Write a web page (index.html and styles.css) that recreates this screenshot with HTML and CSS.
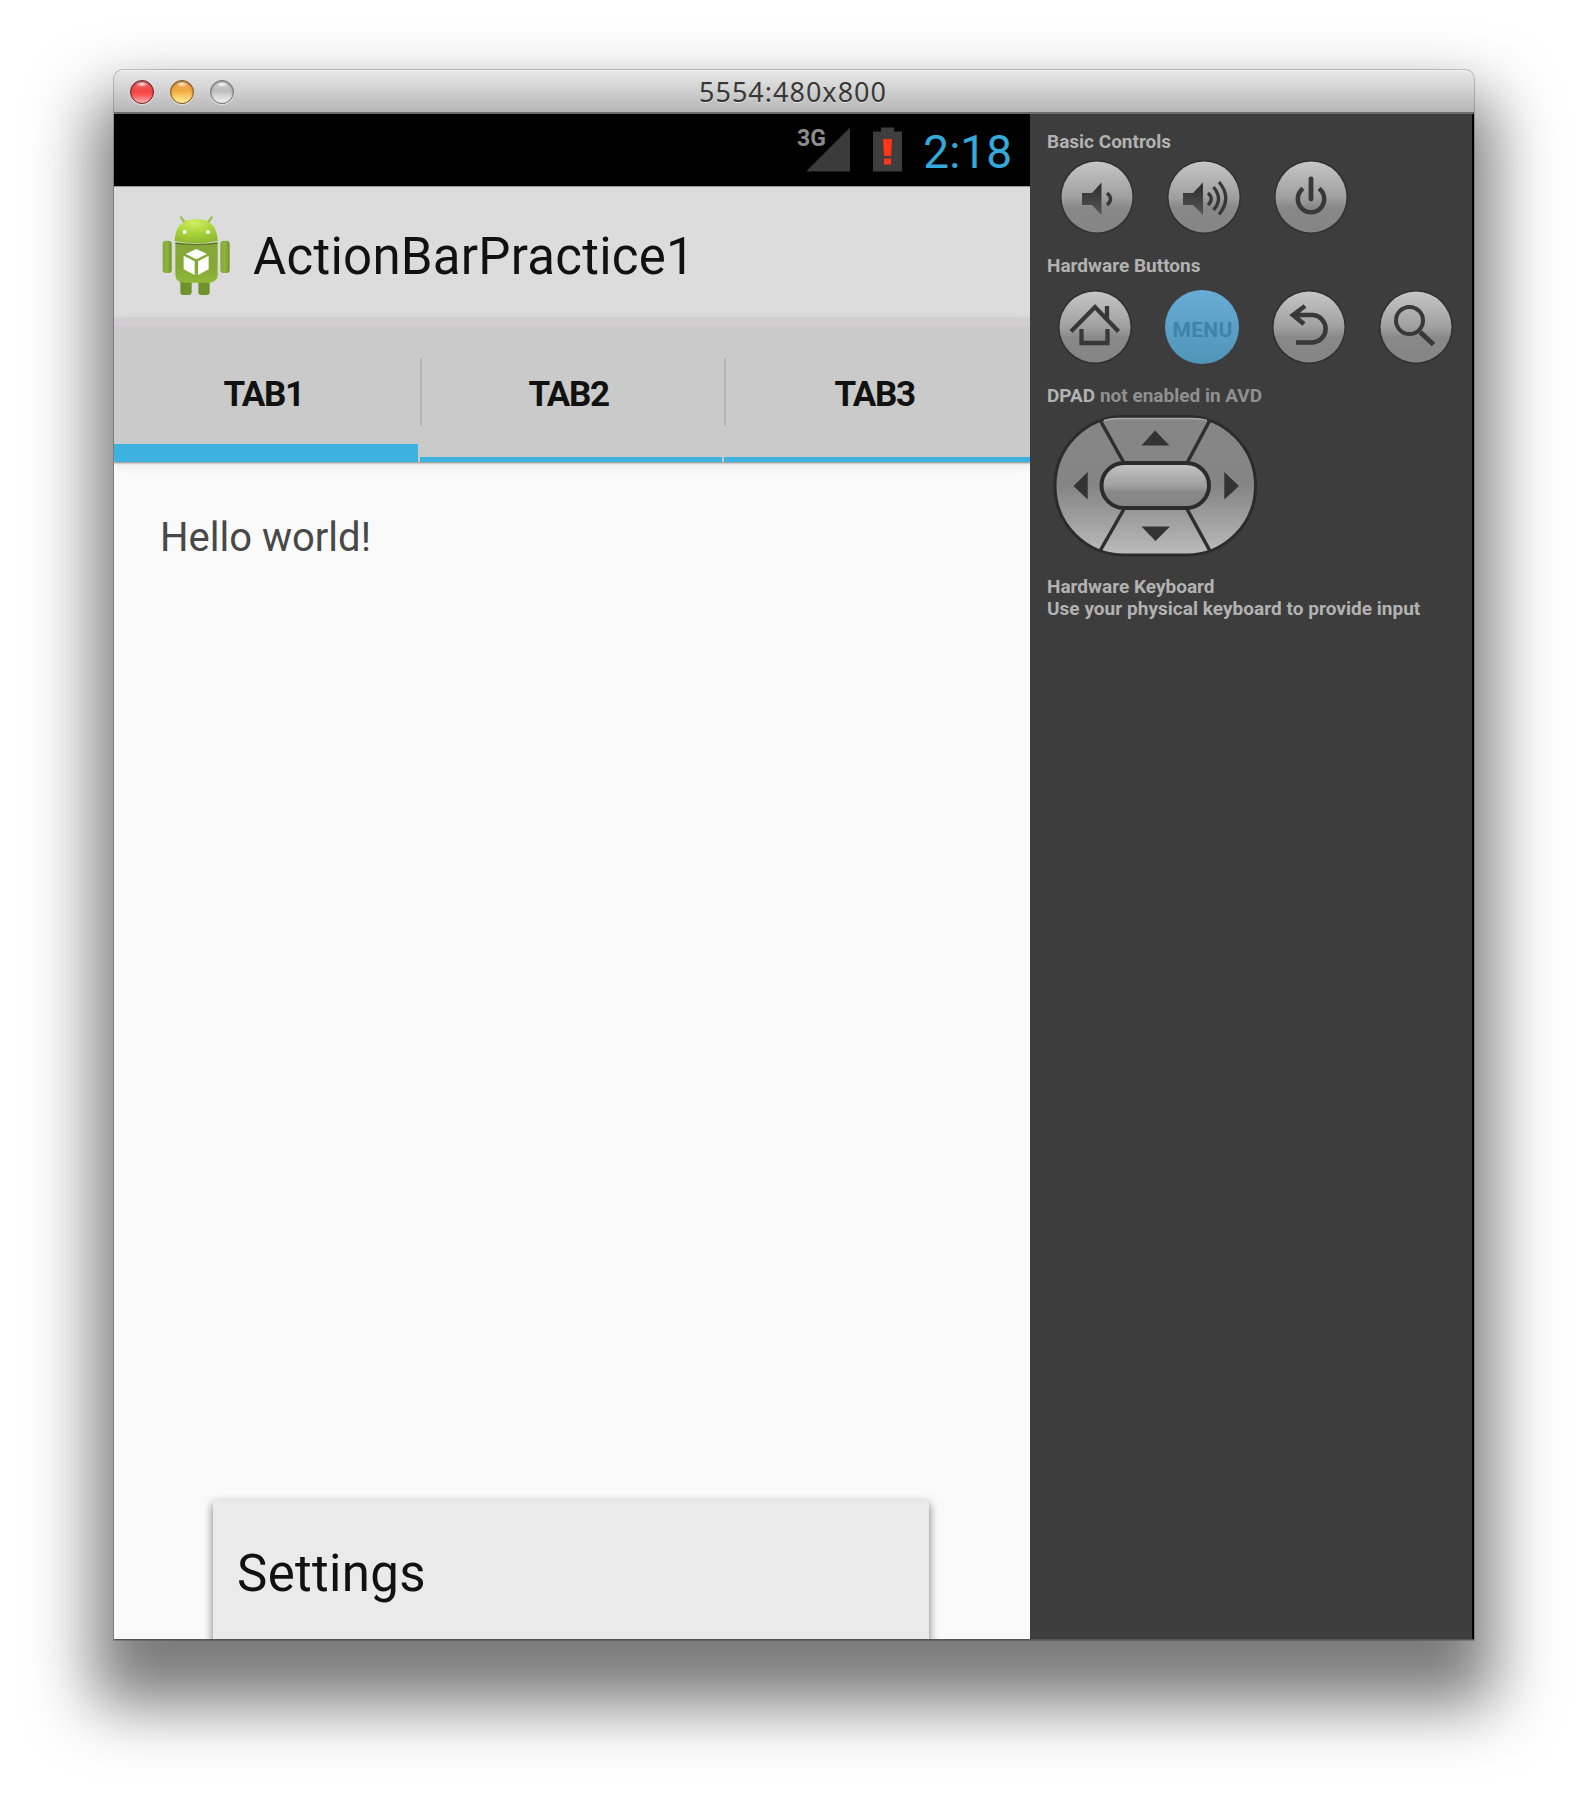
FILE: index.html
```html
<!DOCTYPE html>
<html lang="en">
<head>
<meta charset="utf-8">
<title>5554:480x800</title>
<link rel="stylesheet" href="styles.css">
</head>
<body>
<svg class="defs" width="0" height="0" aria-hidden="true">
  <defs>
    <linearGradient id="metal" x1="0" y1="0" x2="0" y2="1">
      <stop offset="0" stop-color="#c6c6c6"/><stop offset=".5" stop-color="#a0a0a0"/><stop offset=".65" stop-color="#888"/><stop offset="1" stop-color="#858585"/>
    </linearGradient>
    <linearGradient id="pad" x1="0" y1="0" x2="0" y2="1">
      <stop offset="0" stop-color="#868686"/><stop offset=".5" stop-color="#858585"/><stop offset=".8" stop-color="#a5a5a5"/><stop offset="1" stop-color="#bcbcbc"/>
    </linearGradient>
    <linearGradient id="glyph" x1="0" y1="0" x2="0" y2="1">
      <stop offset="0" stop-color="#2c2c2c"/><stop offset="1" stop-color="#555"/>
    </linearGradient>
    <linearGradient id="blue" x1="0" y1="0" x2="0" y2="1">
      <stop offset="0" stop-color="#68add4"/><stop offset="1" stop-color="#5094ba"/>
    </linearGradient>
    <linearGradient id="limb" x1="0" y1="0" x2="1" y2="0">
      <stop offset="0" stop-color="#84a836"/><stop offset=".5" stop-color="#8fb441"/><stop offset="1" stop-color="#6f9129"/>
    </linearGradient>
    <linearGradient id="torso" x1="0" y1="0" x2="0" y2="1">
      <stop offset="0" stop-color="#86a63a"/><stop offset=".6" stop-color="#85a934"/><stop offset="1" stop-color="#8fb83a"/>
    </linearGradient>
    <radialGradient id="head" cx=".45" cy=".15" r=".9">
      <stop offset="0" stop-color="#d3ee63"/><stop offset=".5" stop-color="#a8d43a"/><stop offset="1" stop-color="#8ab62f"/>
    </radialGradient>
  </defs>
</svg>

<main class="window">
  <header class="titlebar">
    <div class="lights"><i class="light red"></i><i class="light amber"></i><i class="light clear"></i></div>
    <h1 class="title">5554:480x800</h1>
  </header>
  <div class="content">
    <section class="screen">
      <div class="status">
        <svg class="signal" width="56" height="48" viewBox="0 0 56 48">
          <path d="M10 45.500 54 1.500V45.500Z" fill="#3b3b3b"/>
          <text x="1" y="20" class="net">3G</text>
        </svg>
        <svg class="battery" width="30" height="46" viewBox="0 0 30 46">
          <path d="M0 5.500H8V1.500H21V5.500H29V45.500H0Z" fill="#3e3e3e"/>
          <path d="M10 13H19L18 30H11ZM11 32.500H18V38.500H11Z" fill="#ff3519"/>
        </svg>
        <span class="clock">2:18</span>
      </div>
      <div class="actionbar">
        <svg width="100" height="110" viewBox="0 0 300 330">
          <path d="M93 49l12 17M185 49l-12 17" stroke="#9dbd55" stroke-width="7" stroke-linecap="round"/>
          <path d="M91 235h34v38q0 9-9 9h-16q-9 0-9-9zM145 235h34v38q0 9-9 9h-16q-9 0-9-9z" fill="#6f932a"/>
          <rect x="38" y="119" width="27" height="97" rx="10" fill="url(#limb)"/>
          <rect x="211" y="119" width="28" height="97" rx="10" fill="url(#limb)"/>
          <path d="M76 128H203V220Q203 245 178 245H101Q76 245 76 220Z" fill="url(#torso)"/>
          <path d="M74 120Q76 55 139 54Q201 55 203 120Q139 134 74 120Z" fill="url(#head)"/>
          <path d="M76 124Q139 134 203 124V129Q139 136 76 129Z" fill="#5c7822"/>
          <circle cx="104" cy="93" r="6" fill="#fff"/><circle cx="174" cy="93" r="6" fill="#fff"/>
          <path d="M139 144 171 159 139 175 107 159ZM101 164 134 181V222L101 205ZM176 164 144 181V222L176 205Z" fill="#fff"/>
        </svg>
        <span class="app-name">ActionBarPractice1</span>
      </div>
      <nav class="tabs">
        <a class="tab selected">TAB1</a>
        <a class="tab">TAB2</a>
        <a class="tab">TAB3</a>
      </nav>
      <div class="page"><p class="hello">Hello world!</p></div>
      <div class="menu"><span class="menu-item">Settings</span></div>
    </section>

    <aside class="side">
      <h2 class="label">Basic Controls</h2>
      <div class="buttons first">
        <svg class="btn" viewBox="-38 -38 76 76"><circle class="rim" r="37"/><circle r="35.500" fill="url(#metal)"/>
          <path d="M-15-4H-5L4.500-14.500V18L-5 8H-15Z" fill="url(#glyph)"/><path class="line" stroke-width="3.500" d="M10-4Q17 2 10 8"/></svg>
        <svg class="btn" viewBox="-38 -38 76 76"><circle class="rim" r="37"/><circle r="35.500" fill="url(#metal)"/>
          <path d="M-21-4H-11L-1-14.500V18L-11 8H-21Z" fill="url(#glyph)"/><path class="line" stroke-width="3.300" d="M4-4Q10.500 2 4 8M9.500-10Q19.500 2 9.500 13M15-15Q28.500 1 15 17.500"/></svg>
        <svg class="btn" viewBox="-38 -38 76 76"><circle class="rim" r="37"/><circle r="35.500" fill="url(#metal)"/>
          <path class="line" stroke-width="4.500" d="M-8-8.500A13.200 13.200 0 1 0 8-8.500"/><path class="line" stroke-width="4.800" stroke-linecap="round" d="M0-18V2"/></svg>
      </div>
      <h2 class="label">Hardware Buttons</h2>
      <div class="buttons second">
        <svg class="btn" viewBox="-38 -38 76 76"><circle class="rim" r="37"/><circle r="35.500" fill="url(#metal)"/>
          <path class="line" stroke-width="4.300" d="M-24 4.500 0-20 23.500 4.500M12-21V-8M-13.500 2V16H12.500V2"/></svg>
        <svg class="btn" viewBox="-38 -38 76 76"><circle r="37" fill="url(#blue)"/><text class="menu-text" x="0.500" y="9.500">MENU</text></svg>
        <svg class="btn" viewBox="-38 -38 76 76"><circle class="rim" r="37"/><circle r="35.500" fill="url(#metal)"/>
          <path class="line" stroke-width="4.500" d="M-4-21-16-12-5-3M-15-12H4A13.800 13.800 0 0 1 4 15.500H-13"/></svg>
        <svg class="btn" viewBox="-38 -38 76 76"><circle class="rim" r="37"/><circle r="35.500" fill="url(#metal)"/>
          <circle class="line" stroke-width="4" cx="-6.500" cy="-6.500" r="13.500"/><path class="line" stroke-width="5" d="M4 5 17.500 17.500"/></svg>
      </div>
      <h2 class="label">DPAD <span class="dim">not enabled in AVD</span></h2>
      <svg class="dpad" width="206" height="147" viewBox="0 0 206 147">
        <rect x="3" y="4.500" width="200.500" height="138.500" rx="69" ry="69" fill="url(#pad)" stroke="#2b2b2b" stroke-width="3"/>
        <path d="M52 8.500Q59 6.500 66 6.500H140Q149 6.500 155 8.500" fill="none" stroke="#aaa" stroke-width="1.500"/>
        <path d="M48 8 72 51M158 8 135 51M48 139 72 97M158 139 135 97" stroke="#2e2e2e" stroke-width="3.500"/>
        <rect x="49.500" y="51" width="107.500" height="45" rx="22.500" fill="url(#metal)" stroke="#2b2b2b" stroke-width="4"/>
        <path d="M103 18.500 117.500 33.500H89.500ZM89.500 114.500H118L103.500 129ZM21.500 74 35.700 60V87.500ZM172.300 60 187 74 172.300 87.500Z" fill="#333"/>
      </svg>
      <h2 class="label">Hardware Keyboard</h2>
      <p class="label hint">Use your physical keyboard to provide input</p>
    </aside>
  </div>
</main>
</body>
</html>
```
FILE: styles.css
```css
* { box-sizing: border-box; }
body { margin: 0; padding: 70px 114px 0; width: 1588px; height: 1798px; overflow: hidden; background: #fff; font-family: Roboto, "Liberation Sans", sans-serif; }
.defs { position: absolute; }
svg { display: block; flex: none; }
h1, h2, p { margin: 0; }

.window { width: 1360px; height: 1570px; border-radius: 9px 9px 0 0; background: #3d3d3d; box-shadow: 0 0 0 1px rgba(0,0,0,.2), 0 45px 64px 20px rgba(0,0,0,.52); }
.titlebar { height: 44px; padding: 0 16px; display: grid; grid-template-columns: 1fr auto 1fr; align-items: center; border-radius: 9px 9px 0 0; border-bottom: 2px solid #6a6a6a; background: linear-gradient(#e9e9e9, #d5d5d5 40%, #b5b5b5); box-shadow: inset 0 1px 0 #f3f3f3; }
.lights { display: flex; gap: 16px; padding-top: 1px; }
.light { width: 24px; height: 24px; border-radius: 50%; border: 1.500px solid; box-shadow: 0 1px 1px rgba(255,255,255,.6), inset 0 1px 2px rgba(0,0,0,.4); }
.red { border-color: #6e2222; background: radial-gradient(ellipse 6px 3px at 50% 14%, #ffe9e9, transparent), linear-gradient(#e87272, #f54343 45%, #f85757 65%, #ffb5b5); }
.amber { border-color: #865314; background: radial-gradient(ellipse 6px 3px at 50% 14%, #fff3df, transparent), linear-gradient(#e9a65a, #f2a73c 45%, #f8c660 65%, #fff0a0); }
.clear { border-color: #727272; background: radial-gradient(ellipse 6px 3px at 50% 14%, #fff, transparent), linear-gradient(#cfcfcf, #bdbdbd 45%, #d2d2d2 65%, #f3f3f3); }
.title { font: 400 27px/40px "Noto Sans", sans-serif; letter-spacing: 1px; color: #383838; text-shadow: 0 1px 0 rgba(255,255,255,.5); padding: 1px 2px 0 0; }

.content { display: flex; height: 1526px; border-bottom: 1px solid #555; }
.screen { position: relative; width: 916px; overflow: hidden; display: flex; flex-direction: column; background: #fafafa; }
.side { flex: 1; padding: 17px 0 0 17px; background: #3d3d3d; border-right: 2px solid #000; }

.status { height: 72px; padding-right: 18px; display: flex; justify-content: flex-end; background: #000; }
.signal { margin: 12px 21px 0 0; overflow: visible; }
.battery { margin: 12px 20px 0 0; }
.net { font: 700 23px Roboto, sans-serif; fill: #8c8c8c; }
.clock { font-size: 46px; line-height: 54px; padding-top: 11px; color: #33a9dc; }

.actionbar { height: 132px; padding: 14px 0 0 36px; display: flex; border-top: 1px solid #999; background: #dcdcdc; }
.app-name { font-size: 51px; line-height: 60px; letter-spacing: .25px; margin: 26px 0 0 3px; color: #111; }

.tabs { height: 144px; display: grid; grid-template-columns: 304px 302px 1fr; gap: 2px; align-items: start; border-top: 8px solid #d1cdd1; background: #cacaca; box-shadow: 0 1px 2px rgba(0,0,0,.45), 0 4px 12px rgba(60,0,40,.07); z-index: 1; }
.tab { height: 136px; padding: 48px 5px 0 0; text-align: center; font-size: 35px; line-height: 41px; font-weight: 700; letter-spacing: -1.400px; color: #111; border-bottom: 5px solid #3db2e0; }
.tab + .tab { background: linear-gradient(#b5b5b5, #b5b5b5) 0 32px / 2px 68px no-repeat; }
.selected { border-bottom-width: 18px; }

.page { flex: 1; padding: 52px 46px; }
.hello { font-size: 40px; line-height: 47px; color: #484848; }
.menu { position: absolute; left: 99px; top: 1386px; width: 716px; height: 160px; padding: 44px 24px; border-radius: 4px; background: #eaeaea; box-shadow: 0 4px 8px 1px rgba(20,40,20,.5); }
.menu-item { font-size: 51px; line-height: 60px; letter-spacing: .35px; color: #111; display: block; }

.label { font-size: 19px; line-height: 22px; font-weight: 700; color: #b2b2b2; }
.dim { color: #909090; }
.buttons { display: flex; gap: 31px; }
.first { margin: 6px 0 20px 12px; }
.second { margin: 11.500px 0 20.500px 10px; }
.btn { width: 76px; height: 76px; }
.rim { fill: #303030; }
.line { fill: none; stroke: #383838; }
.menu-text { font: 700 21px Roboto, sans-serif; text-anchor: middle; fill: #3e82aa; letter-spacing: .3px; }
.dpad { margin: 5px 0 17px 5px; }
.hint { letter-spacing: .03px; }
```
